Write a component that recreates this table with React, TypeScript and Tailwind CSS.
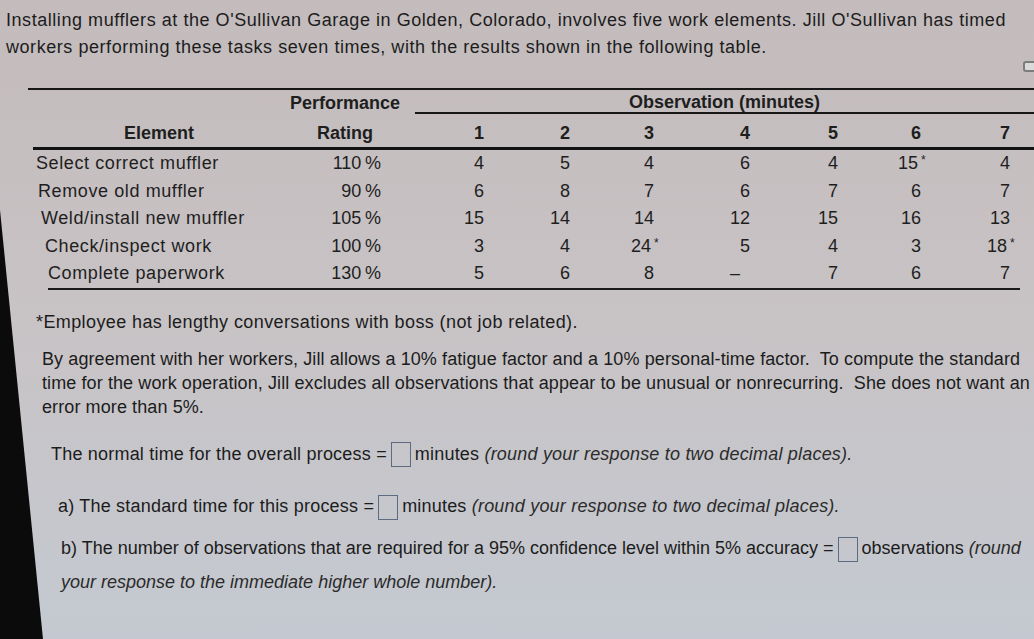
import React from "react";

type Row = {
  name: string;
  rating: string;
  obs: string[];
  indent: string;
};

// "*" marks the unusual observations, "–" a missing one
const ROWS: Row[] = [
  { name: "Select correct muffler", rating: "110", obs: ["4", "5", "4", "6", "4", "15*", "4"], indent: "pl-[8px]" },
  { name: "Remove old muffler", rating: "90", obs: ["6", "8", "7", "6", "7", "6", "7"], indent: "pl-[10px]" },
  { name: "Weld/install new muffler", rating: "105", obs: ["15", "14", "14", "12", "15", "16", "13"], indent: "pl-[13px]" },
  { name: "Check/inspect work", rating: "100", obs: ["3", "4", "24*", "5", "4", "3", "18*"], indent: "pl-[17px]" },
  { name: "Complete paperwork", rating: "130", obs: ["5", "6", "8", "–", "7", "6", "7"], indent: "pl-[20px]" },
];

function Cell({ value }: { value: string }) {
  const star = value.endsWith("*");
  const num = star ? value.slice(0, -1) : value;
  return (
    <div className={`text-right ${num === "–" ? "pr-[12px]" : "pr-[2px]"}`}>
      {num}
      {star && <span className="inline-block w-0 pl-[3px] align-top text-[12px] leading-[20px]">*</span>}
    </div>
  );
}

function AnswerBox() {
  return <span className="mx-[4px] inline-block h-[25px] w-[20px] border-[1.5px] border-[#5d6b80] align-middle" />;
}

export default function App() {
  return (
    <div className="relative h-[639px] w-[1034px] overflow-hidden bg-linear-to-b from-[#c3bbbc] via-[#c8c3c5] to-[#c4c9d1] font-['Liberation_Sans',Arial,sans-serif] text-[#1c1c1c]">
      {/* intro */}
      <p className="pl-[6px] pt-[7px] text-[18px] leading-[27px] tracking-[0.55px]">
        Installing mufflers at the O'Sullivan Garage in Golden, Colorado, involves five work elements. Jill O'Sullivan has timed
        <br />
        workers performing these tasks seven times, with the results shown in the following table.
      </p>

      {/* table */}
      <div className="ml-[28px] mt-[27px] grid grid-cols-[262px_110px_86px_86px_84px_96px_88px_83px_89px_22px] border-t-2 border-[#161616] text-[18px] text-[#1e1e1e]">
        {/* header row 1 */}
        <div className="h-[24px]" />
        <div className="h-[24px] whitespace-nowrap pt-[2px] text-center text-[18px] font-bold leading-[22px]">Performance</div>
        <div className="col-span-8 ml-[15px] h-[24px] whitespace-nowrap border-b-2 border-[#161616] pt-[1px] text-center font-bold leading-[22px]">
          Observation (minutes)
        </div>

        {/* header row 2 */}
        <div className="flex h-[33px] items-end justify-center pb-[3px] font-bold leading-[22px]">Element</div>
        <div className="flex h-[33px] items-end justify-center pb-[3px] font-bold leading-[22px]">Rating</div>
        {["1", "2", "3", "4", "5", "6", "7"].map((n) => (
          <div key={n} className="flex h-[33px] items-end justify-end pb-[3px] pr-[2px] font-bold leading-[22px]">
            {n}
          </div>
        ))}
        <div />

        <div className="col-span-10 ml-[5px] h-[3px] bg-[#121212]" />

        {ROWS.map((r) => (
          <React.Fragment key={r.name}>
            <div className={`h-[27.5px] whitespace-nowrap leading-[27.5px] tracking-[0.6px] ${r.indent}`}>{r.name}</div>
            <div className="h-[27.5px] pr-[19px] text-right leading-[27.5px]">{r.rating}{"\u2009"}%</div>
            {r.obs.map((v, i) => (
              <div key={i} className="h-[27.5px] leading-[27.5px]">
                <Cell value={v} />
              </div>
            ))}
            <div />
          </React.Fragment>
        ))}

        <div className="col-span-10 ml-[20px] mr-[14px] h-[2px] bg-[#1a1a1a]" />
      </div>

      {/* notes */}
      <p className="mt-[20px] pl-[36px] text-[18px] leading-[24px] tracking-[0.4px]">*Employee has lengthy conversations with boss (not job related).</p>

      <p className="mt-[13px] pl-[42px] text-[18px] leading-[24px] tracking-[0.1px]">
        By agreement with her workers, Jill allows a 10% fatigue factor and a 10% personal-time factor.&nbsp; To compute the standard
        <br />
        time for the work operation, Jill excludes all observations that appear to be unusual or nonrecurring.&nbsp; She does not want an
        <br />
        error more than 5%.
      </p>

      {/* questions */}
      <p className="mt-[22px] pl-[51px] text-[18px] leading-[26px] tracking-[0.2px]">
        The normal time for the overall process =<AnswerBox />minutes <span className="italic text-[#2b2b2b]">(round your response to two decimal places).</span>
      </p>

      <p className="mt-[26px] pl-[58px] text-[18px] leading-[26px] tracking-[0.2px]">
        a) The standard time for this process =<AnswerBox />minutes <span className="italic text-[#2b2b2b]">(round your response to two decimal places).</span>
      </p>

      <p className="mt-[11px] pl-[61px] text-[18px] leading-[34px]">
        b) The number of observations that are required for a 95% confidence level within 5% accuracy =<AnswerBox />observations{" "}
        <span className="italic text-[#2b2b2b]">
          (round
          <br />
          your response to the immediate higher whole number).
        </span>
      </p>

      {/* small control cut off at the right edge */}
      <div className="absolute right-[-4px] top-[61px] h-[11px] w-[15px] rounded-[3px] border-2 border-[#7c7c7c] bg-[#dadada]" />

      {/* dark monitor bezel at the lower left of the photo */}
      <svg className="pointer-events-none absolute inset-0" width="1034" height="639" viewBox="0 0 1034 639">
        <polygon points="0,210 43,639 0,639" fill="#0b0b0c" />
      </svg>
    </div>
  );
}
